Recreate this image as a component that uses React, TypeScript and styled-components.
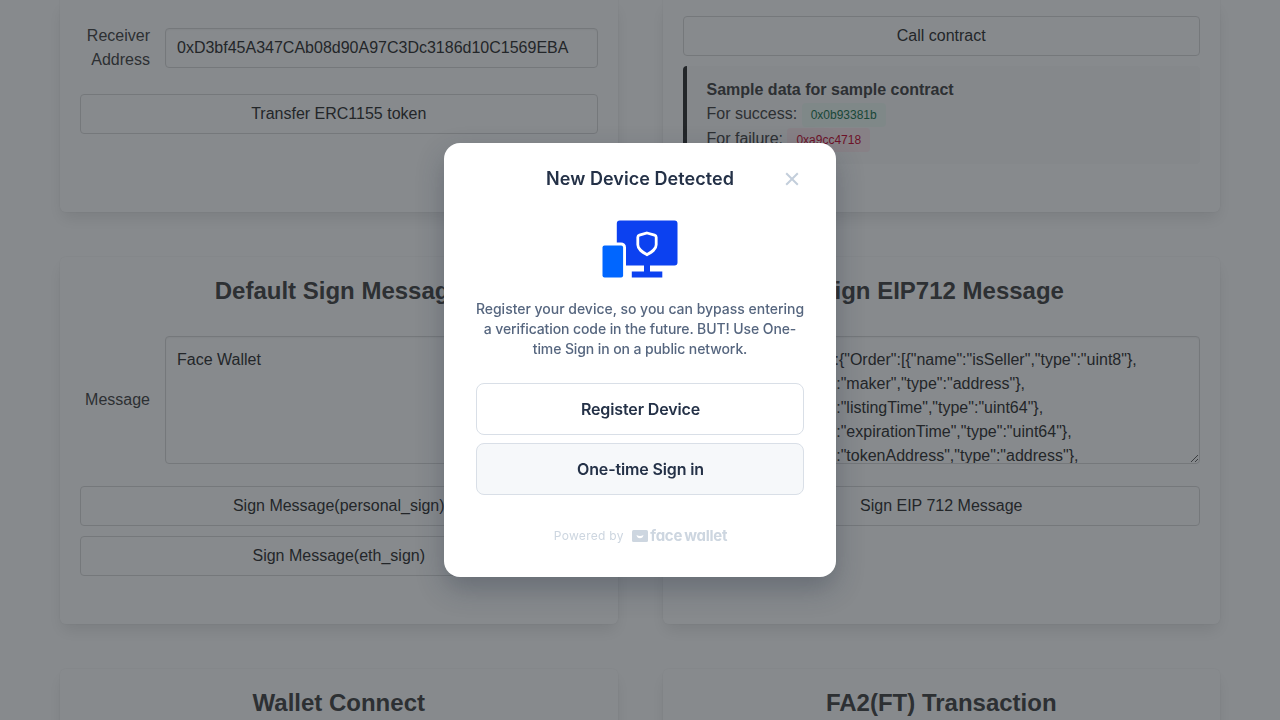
import React from "react";
import styled, { createGlobalStyle } from "styled-components";

const GlobalStyle = createGlobalStyle`
  *, *::before, *::after { box-sizing: border-box; }
  html, body { margin: 0; height: 100%; overflow: hidden; background: #fff; }
  body {
    font-family: "Liberation Sans", Arial, sans-serif;
    font-size: 16px;
    line-height: 24px;
    color: #4a4a4a;
  }
`;

const Page = styled.main`
  height: 720px;
  overflow: hidden;
  padding: 0 60px;
`;

const Grid = styled.div`
  display: grid;
  grid-template-columns: 1fr 1fr;
  grid-template-rows: 212px 367px 367px;
  gap: 45px;
`;

const Card = styled.section<{ $top?: number }>`
  display: flex;
  flex-direction: column;
  min-width: 0;
  padding: ${(p) => p.$top ?? 20}px 20px 20px;
  border-radius: ${(p) => (p.$top === undefined ? "6px" : "0 0 6px 6px")};
  background: #fff;
  box-shadow: 0 8px 16px -2px rgba(10, 10, 10, 0.1), 0 0 0 1px rgba(10, 10, 10, 0.02);
`;

const CardTitle = styled.h2`
  margin: 0 0 32px;
  font-size: 24px;
  line-height: 27px;
  font-weight: 600;
  text-align: center;
  color: #4a4a4a;
`;

const Field = styled.div<{ $gap: number }>`
  display: flex;
  align-items: center;
  gap: 15px;
  margin-bottom: ${(p) => p.$gap}px;
`;

const Label = styled.label`
  flex: 0 0 70px;
  text-align: right;
`;

const Input = styled.input`
  flex: 1;
  min-width: 0;
  height: 40px;
  padding: 0 11px;
  border: 1px solid #dbdbdb;
  border-radius: 4px;
  background: #fff;
  box-shadow: inset 0 1px 2px rgba(10, 10, 10, 0.05);
  font: inherit;
  color: #363636;
`;

const TextArea = styled.textarea`
  display: block;
  flex: 1;
  min-width: 0;
  height: 128px;
  padding: 11px;
  border: 1px solid #dbdbdb;
  border-radius: 4px;
  background: #fff;
  box-shadow: inset 0 1px 2px rgba(10, 10, 10, 0.05);
  font: inherit;
  color: #363636;
  resize: vertical;
  scrollbar-width: none;
`;

const Button = styled.button`
  flex: none;
  height: 40px;
  margin: 0 0 10px;
  padding: 0 16px;
  border: 1px solid #dbdbdb;
  border-radius: 4px;
  background: #fff;
  font: inherit;
  color: #363636;
`;

const Note = styled.article`
  height: 98px;
  padding: 12px 20px;
  border-left: 4px solid #363636;
  border-radius: 4px;
  background: #fafafa;
`;

const NoteTitle = styled.div`
  font-weight: 700;
`;

const NoteLine = styled.div`
  display: flex;
  align-items: flex-start;
  gap: 4.45px;
  height: 25px;
`;

const Tag = styled.span<{ $tone: "success" | "danger" }>`
  height: 24px;
  margin-top: 1px;
  padding: 0 9px;
  border-radius: 4px;
  font-size: 12px;
  line-height: 24px;
  background: ${(p) => (p.$tone === "success" ? "#effaf5" : "#feecf0")};
  color: ${(p) => (p.$tone === "success" ? "#257953" : "#cc0f35")};
`;

const Overlay = styled.div`
  position: fixed;
  inset: 0;
  display: flex;
  align-items: center;
  justify-content: center;
  background: rgba(15, 21, 28, 0.5);
  font-family: Inter, sans-serif;
`;

const Dialog = styled.div`
  display: flex;
  flex-direction: column;
  align-items: center;
  width: 392px;
  height: 434px;
  padding: 16px 32px 0;
  border-radius: 16px;
  background: #fff;
  box-shadow: 0 12px 28px rgba(35, 46, 66, 0.32);
`;

const DialogHeader = styled.header`
  display: grid;
  grid-template-columns: 24px 1fr 24px;
  align-items: center;
  width: 100%;
  height: 40px;
`;

const DialogTitle = styled.h1`
  grid-column: 2;
  margin: 0;
  font-size: 18px;
  font-weight: 600;
  letter-spacing: 0.05px;
  text-align: center;
  color: #243147;
`;

const CloseButton = styled.button`
  display: flex;
  padding: 0;
  border: 0;
  background: none;
`;

const DeviceIcon = styled.svg`
  flex: none;
  margin-top: 10px;
`;

const Description = styled.p`
  margin: 10px -4px 24px;
  font-size: 14px;
  line-height: 20px;
  font-weight: 480;
  letter-spacing: -0.1px;
  text-align: center;
  color: #56667f;

  &::first-line {
    letter-spacing: -0.02px;
  }
`;

const Choice = styled.button<{ $filled?: boolean }>`
  flex: none;
  width: 100%;
  height: 52px;
  margin-bottom: 8px;
  padding: 0 0 0 1px;
  border: 1px solid #d9dfe7;
  border-radius: 8px;
  background: ${(p) => (p.$filled ? "#f6f8fa" : "#fff")};
  font: 600 16px/24px Inter, sans-serif;
  letter-spacing: -0.13px;
  color: #243147;
`;

const Footer = styled.footer`
  display: flex;
  align-items: center;
  height: 20px;
  margin-top: 23px;
  padding-left: 1px;
  color: #cdd6e0;
`;

const Powered = styled.span`
  margin-right: 8px;
  font-size: 12px;
  letter-spacing: 0.3px;
`;

const Brand = styled.span`
  margin-left: 2.5px;
  font-size: 15px;
  line-height: 20px;
  font-weight: 650;
  letter-spacing: -0.28px;
  word-spacing: -1px;
  font-feature-settings: "cv11";
`;

const ORDER_DATA = `{"types":{"Order":[{"name":"isSeller","type":"uint8"},
{"name":"maker","type":"address"},
{"name":"listingTime","type":"uint64"},
{"name":"expirationTime","type":"uint64"},
{"name":"tokenAddress","type":"address"},
{"name":"tokenId","type":"uint256"}]}}`;

export default function App() {
  return (
    <>
      <GlobalStyle />
      <Page>
        <Grid>
          <Card $top={24}>
            <Field $gap={22}>
              <Label>Receiver Address</Label>
              <Input defaultValue="0xD3bf45A347CAb08d90A97C3Dc3186d10C1569EBA" />
            </Field>
            <Button>Transfer ERC1155 token</Button>
          </Card>
          <Card $top={16}>
            <Button>Call contract</Button>
            <Note>
              <NoteTitle>Sample data for sample contract</NoteTitle>
              <NoteLine>
                For success: <Tag $tone="success">0x0b93381b</Tag>
              </NoteLine>
              <NoteLine>
                For failure: <Tag $tone="danger">0xa9cc4718</Tag>
              </NoteLine>
            </Note>
          </Card>
          <Card>
            <CardTitle>Default Sign Message</CardTitle>
            <Field $gap={22}>
              <Label>Message</Label>
              <TextArea defaultValue="Face Wallet" />
            </Field>
            <Button>Sign Message(personal_sign)</Button>
            <Button>Sign Message(eth_sign)</Button>
          </Card>
          <Card>
            <CardTitle>Sign EIP712 Message</CardTitle>
            <Field $gap={22}>
              <Label>Message</Label>
              <TextArea defaultValue={ORDER_DATA} />
            </Field>
            <Button>Sign EIP 712 Message</Button>
          </Card>
          <Card>
            <CardTitle>Wallet Connect</CardTitle>
          </Card>
          <Card>
            <CardTitle>FA2(FT) Transaction</CardTitle>
          </Card>
        </Grid>
      </Page>
      <Overlay>
        <Dialog role="dialog">
          <DialogHeader>
            <DialogTitle>New Device Detected</DialogTitle>
            <CloseButton aria-label="Close">
              <svg width="24" height="24" viewBox="0 0 24 24" fill="none" stroke="#c3cedb" strokeWidth="2">
                <path d="M6.200 6.200l11.600 11.600M17.800 6.200L6.200 17.800" />
              </svg>
            </CloseButton>
          </DialogHeader>
          <DeviceIcon width="80" height="80" viewBox="0 0 80 80" fill="none">
            <path
              d="M19.500 11.500h55a3 3 0 0 1 3 3v39a3 3 0 0 1-3 3H50v6h12.300v6H31.800v-6H44v-6H26V38.400a5 5 0 0 0-5-5h-4.200V14.500a3 3 0 0 1 3-3z"
              fill="#0c41f0"
            />
            <rect x="2.500" y="36.500" width="20.600" height="32" rx="2" fill="#0066ff" />
            <path
              d="M47 24l7.600 2.100q1.600.5 1.600 2.200v7.500c0 4.600-4.600 7.200-9.200 9.900-4.600-2.700-9.200-5.300-9.200-9.900v-7.500q0-1.700 1.600-2.200z"
              stroke="#fff"
              strokeWidth="2.800"
            />
          </DeviceIcon>
          <Description>
            Register your device, so you can bypass entering
            <br />a verification code in the future. BUT! Use One-
            <br />
            time Sign in on a public network.
          </Description>
          <Choice>Register Device</Choice>
          <Choice $filled>One-time Sign in</Choice>
          <Footer>
            <Powered>Powered by</Powered>
            <svg width="16" height="12" viewBox="0 0 16 12">
              <rect width="16" height="12" rx="1.500" fill="currentColor" />
              <path d="M4.500 5q1.700.9 3.500.9t3.500-.9q-.7 3.300-3.500 3.300T4.500 5z" fill="#fff" />
            </svg>
            <Brand>face wallet</Brand>
          </Footer>
        </Dialog>
      </Overlay>
    </>
  );
}
